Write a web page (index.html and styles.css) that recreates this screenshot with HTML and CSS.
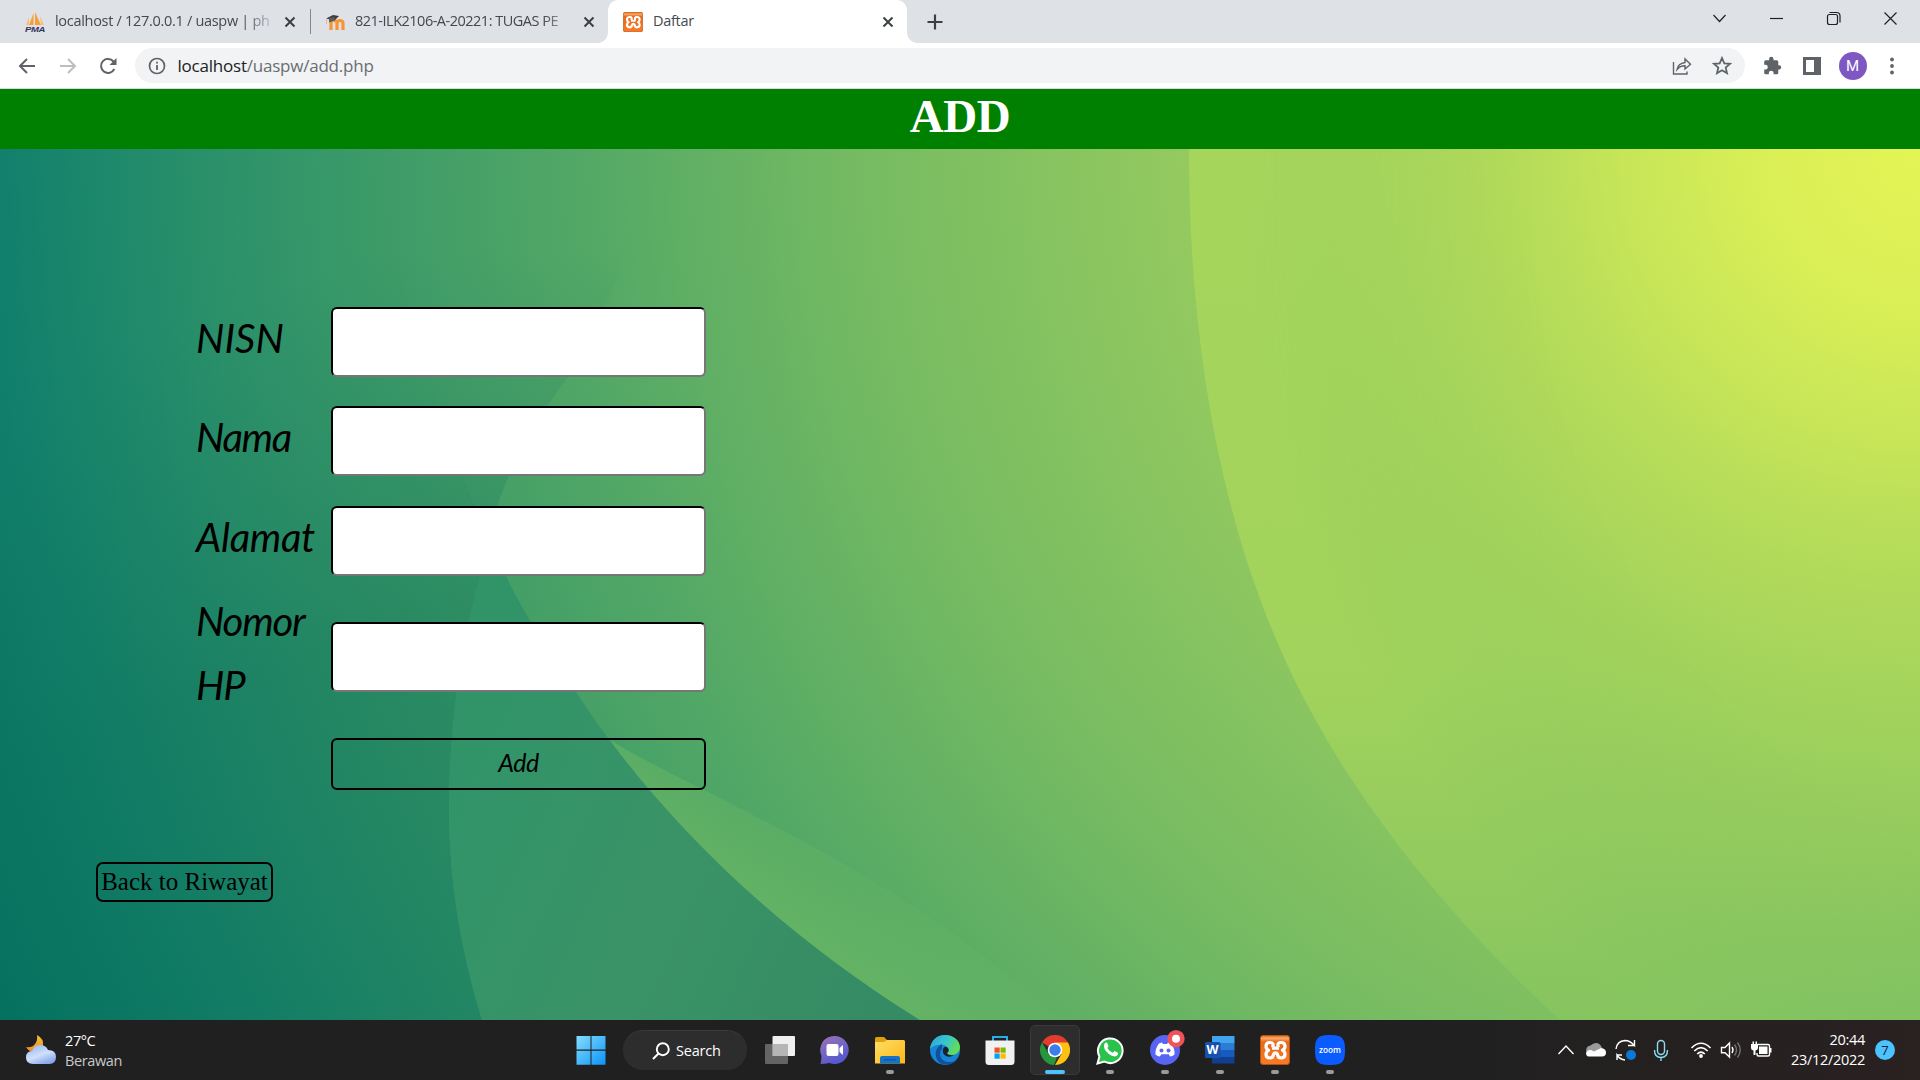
FILE: index.html
```html
<!DOCTYPE html>
<html lang="id">
<head>
<meta charset="utf-8">
<title>Daftar</title>
<link rel="stylesheet" href="styles.css">
</head>
<body>
<svg class="defs" width="0" height="0" aria-hidden="true">
  <defs>
    <linearGradient id="orange" x1="0" y1="0" x2="0" y2="1"><stop offset="0" stop-color="#d9712b"/><stop offset=".1" stop-color="#ffa564"/><stop offset=".22" stop-color="#e56a1b"/><stop offset="1" stop-color="#fb7a24"/></linearGradient>
    <symbol id="xampp" viewBox="0 0 30 30">
      <rect x=".5" y=".5" width="29" height="29" rx="2.500" fill="url(#orange)" stroke="#b5560f"/>
      <path d="M12.500 12.500Q14.500 7.500 10 7.500Q6 7.500 6 11.300Q6 14 8.500 15.200Q6 16.400 6 19.300Q6 23 10 23Q13 23 13.500 19.500Q14 17.800 15.500 17.800Q17 17.800 17.500 19.500Q18 23 21 23Q25 23 25 19.300Q25 16.400 22.500 15.200Q25 14 25 11.300Q25 7.500 21 7.500Q16.500 7.500 18.500 12.500M12 13.200H19" fill="none" stroke="#fff" stroke-width="3.200" stroke-linejoin="round"/>
    </symbol>
    <symbol id="cross" viewBox="0 0 12 12"><path d="M1.500 1.500l9 9m0-9l-9 9" stroke="#3c4043" stroke-width="2" fill="none"/></symbol>
  </defs>
</svg>

<header class="browser">
  <div class="tabstrip">
    <div class="tab tab-first">
      <svg class="favicon" viewBox="0 0 20 20"><path d="M8.500 1v12H4zM10 0l6 13h-6z" fill="#f6a03c"/><path d="M4 5v8H1zM15 4l4 9h-3z" fill="#f9bf74"/><text x="0" y="19.500" class="pma" textLength="20" lengthAdjust="spacingAndGlyphs">PMA</text></svg>
      <span class="tab-title fade">localhost / 127.0.0.1 / uaspw | ph</span>
      <svg class="x"><use href="#cross"/></svg>
    </div>
    <div class="tab tab-second">
      <svg class="favicon" viewBox="0 0 20 20"><path d="M6 18V11.500q0-3 3-3t3 3V18M12 11.500q0-3 3-3t3 3V18" fill="none" stroke="#f79433" stroke-width="3.200"/><path d="M1 6.500l7-3.500 6 1-4.500 4.500z" fill="#3c3c3c"/><path d="M4 6v4.500l5.500-2V5z" fill="#5c5c5c"/><path d="M1.500 6v6" stroke="#d9b79c"/></svg>
      <span class="tab-title fade title-two">821-ILK2106-A-20221: TUGAS PE</span>
      <svg class="x"><use href="#cross"/></svg>
    </div>
    <div class="tab tab-active">
      <svg class="favicon"><use href="#xampp"/></svg>
      <span class="tab-title">Daftar</span>
      <svg class="x"><use href="#cross"/></svg>
    </div>
    <svg class="plus" viewBox="0 0 16 16"><path d="M8 .5v15M.5 8h15" stroke="#3c4043" stroke-width="2.200"/></svg>
    <div class="window-controls">
      <svg viewBox="0 0 57 36"><path d="M22.500 15l6 6.500 6-6.500" /></svg>
      <svg viewBox="0 0 57 36"><path d="M22 18.500h13" /></svg>
      <svg viewBox="0 0 57 36"><rect x="22.500" y="14.500" width="10" height="10" rx="2"/><path d="M24.500 12.500h7q3.500 0 3.500 3.500v6.500"/></svg>
      <svg viewBox="0 0 57 36"><path d="M22.500 12.500l12 12m0-12l-12 12" /></svg>
    </div>
  </div>
  <div class="toolbar">
    <svg class="nav" viewBox="0 0 20 20"><path d="M18 10H3.500M10 3l-7 7 7 7" stroke="#5f6368"/></svg>
    <svg class="nav" viewBox="0 0 20 20"><path d="M2 10h14.500M10 3l7 7-7 7" stroke="#bcbec0"/></svg>
    <svg class="nav" viewBox="0 0 20 20"><path d="M16.300 13A7 7 0 1 1 15.500 5.500" stroke="#5f6368"/><path d="M18.500 2v7h-7z" fill="#5f6368"/></svg>
    <div class="omnibox">
      <svg class="info" viewBox="0 0 18 18"><circle cx="9" cy="9" r="7.500" fill="none" stroke="#5f6368" stroke-width="1.700"/><path d="M9 8v5M9 4.700v1.800" stroke="#5f6368" stroke-width="1.800"/></svg>
      <span class="url"><b>localhost</b>/uaspw/add.php</span>
      <svg class="omni-icon share" viewBox="0 0 20 20"><path d="M1.500 6v12H15v-2.500M5 13.500q1-6 8-7V3l5.500 5.300L13 13v-3.200q-5 0-8 3.700z"/></svg>
      <svg class="omni-icon" viewBox="0 0 20 20"><path d="M10 2l2.300 5.300 5.700.5-4.300 3.800 1.300 5.600-5-3-5 3 1.300-5.600L2 7.800l5.700-.5z" stroke-width="1.800"/></svg>
    </div>
    <svg class="ext" viewBox="0 0 20 20"><path d="M17.500 9.200h-1.200V5.800q0-1.500-1.500-1.500h-3.300V3a2.200 2.200 0 0 0-4.400 0v1.300H3.700q-1.500 0-1.500 1.500v3h1.200a2.400 2.400 0 0 1 0 4.800H2.200v3.200q0 1.500 1.500 1.500h3.100v-1.200a2.400 2.400 0 0 1 4.800 0v1.200h3.200q1.500 0 1.500-1.500v-3.300h1.200a2.200 2.200 0 0 0 0-4.300z" fill="#5f6368"/></svg>
    <svg class="ext" viewBox="0 0 20 20"><path d="M1 1h18v18H1zM4 4v12h8V4z" fill="#5f6368" fill-rule="evenodd"/></svg>
    <div class="avatar">M</div>
    <svg class="ext dots" viewBox="0 0 20 20"><circle cx="10" cy="3.500" r="1.900"/><circle cx="10" cy="10" r="1.900"/><circle cx="10" cy="16.500" r="1.900"/></svg>
  </div>
</header>

<main class="page">
  <h1 class="page-title">ADD</h1>
  <section class="stage">
    <svg class="wallpaper" viewBox="0 149 1920 871" preserveAspectRatio="none" aria-hidden="true">
      <defs>
        <radialGradient id="base" gradientUnits="userSpaceOnUse" cx="1920" cy="120" r="2120">
          <stop offset=".34" stop-color="#95ca5f"/><stop offset=".396" stop-color="#8ac560"/><stop offset=".5" stop-color="#76bb62"/><stop offset=".604" stop-color="#5aac65"/><stop offset=".66" stop-color="#4ca466"/><stop offset=".72" stop-color="#3f9c68"/><stop offset=".81" stop-color="#2a906a"/><stop offset=".906" stop-color="#11806c"/><stop offset="1" stop-color="#007062"/>
        </radialGradient>
        <radialGradient id="sun" gradientUnits="userSpaceOnUse" cx="1920" cy="149" r="870">
          <stop offset="0" stop-color="#e4f455"/><stop offset=".18" stop-color="#daef56"/><stop offset=".33" stop-color="#c8e658"/><stop offset=".46" stop-color="#b6dc5a"/><stop offset=".58" stop-color="#a9d65b"/><stop offset=".72" stop-color="#9bcf5d"/><stop offset=".85" stop-color="#8ec85f"/><stop offset="1" stop-color="#7cc062"/>
        </radialGradient>
        <radialGradient id="rim" gradientUnits="userSpaceOnUse" cx="2281" cy="200" r="1100">
          <stop offset=".68" stop-color="#fff" stop-opacity="0"/><stop offset=".94" stop-color="#fff"/>
        </radialGradient>
        <linearGradient id="rimColor" gradientUnits="userSpaceOnUse" x1="0" y1="149" x2="0" y2="1020">
          <stop offset="0" stop-color="#a6d55b"/><stop offset=".6" stop-color="#a2d35c"/><stop offset="1" stop-color="#86c460"/>
        </linearGradient>
        <mask id="rimMask" maskUnits="userSpaceOnUse" x="1100" y="149" width="820" height="871"><rect x="1100" y="149" width="820" height="871" fill="url(#rim)"/></mask>
        <linearGradient id="shade" gradientUnits="userSpaceOnUse" x1="340" y1="260" x2="460" y2="600">
          <stop offset="0" stop-color="#17775c" stop-opacity="0"/><stop offset="1" stop-color="#107258" stop-opacity=".36"/>
        </linearGradient>
        <linearGradient id="wedge" gradientUnits="userSpaceOnUse" x1="0" y1="250" x2="0" y2="545">
          <stop offset="0" stop-color="#2b8662" stop-opacity="0"/><stop offset="1" stop-color="#2b8662" stop-opacity=".5"/>
        </linearGradient>
        <linearGradient id="leaf" gradientUnits="userSpaceOnUse" x1="450" y1="800" x2="880" y2="1000">
          <stop offset="0" stop-color="#319469"/><stop offset=".5" stop-color="#3a9366"/><stop offset="1" stop-color="#358b64"/>
        </linearGradient>
        <linearGradient id="glow" gradientUnits="userSpaceOnUse" x1="800" y1="960" x2="890" y2="850">
          <stop offset="0" stop-color="#74bd64" stop-opacity=".65"/><stop offset="1" stop-color="#74bd64" stop-opacity="0"/>
        </linearGradient>
      </defs>
      <rect y="149" width="1920" height="871" fill="url(#base)"/>
      <path d="M610 740C690 790 900 870 1060 1020H900C760 930 680 850 610 740z" fill="url(#glow)"/>
      <path d="M380 149C388 230 407 309 430 377Q452 464 488 540Q505 460 568 377Q630 280 650 149z" fill="url(#wedge)"/>
      <path d="M0 149H380C388 230 407 309 430 377Q452 464 490 542Q449 680 449 810Q449 910 482 1020H0z" fill="url(#shade)"/>
      <path d="M490 542C515 600 544 645 576 692C640 790 750 915 920 1020H482Q449 915 449 810Q449 670 490 542z" fill="url(#leaf)"/>
      <path d="M1189 149C1189 320 1213 503 1286 662C1349 799 1451 920 1560 1020H1920V149z" fill="url(#sun)"/>
      <path d="M1189 149C1189 320 1213 503 1286 662C1349 799 1451 920 1560 1020H1920V149z" fill="url(#rimColor)" mask="url(#rimMask)"/>
    </svg>
    <form class="form">
      <label class="label nisn" for="nisn">NISN</label><input class="field" id="nisn" type="text">
      <label class="label nama" for="nama">Nama</label><input class="field" id="nama" type="text">
      <label class="label alamat" for="alamat">Alamat</label><input class="field" id="alamat" type="text">
      <label class="label nomor" for="hp">Nomor<br>HP</label><input class="field" id="hp" type="text">
      <button class="add" type="button">Add</button>
    </form>
    <a class="back">Back to Riwayat</a>
  </section>
</main>

<footer class="taskbar">
  <div class="weather">
    <svg class="weather-icon" viewBox="0 0 30 30">
      <defs><linearGradient id="moon" x1="0" y1="0" x2="0" y2="1"><stop offset="0" stop-color="#f3c52f"/><stop offset="1" stop-color="#f08a24"/></linearGradient><linearGradient id="cloud" x1="0" y1="0" x2=".6" y2="1"><stop offset="0" stop-color="#8db2f2"/><stop offset=".6" stop-color="#cfe0fb"/><stop offset="1" stop-color="#8ba9e8"/></linearGradient></defs>
      <path d="M11 0q7 4 6 10-2 7-9 7-5 0-8-5 6 1 9-3 3-4 2-9z" fill="url(#moon)"/>
      <path d="M7 29q-7 0-7-6.500T6 16q2-6 8-6 6 0 8 5 8 0 8 7t-7 7z" fill="url(#cloud)"/>
    </svg>
    <div class="weather-text"><span>27°C</span><span class="muted">Berawan</span></div>
  </div>
  <nav class="apps">
    <div class="app"><svg class="icon" viewBox="0 0 30 30"><defs><linearGradient id="win" x1="0" y1="0" x2="1" y2="1"><stop offset="0" stop-color="#86dcfb"/><stop offset="1" stop-color="#0a94fb"/></linearGradient></defs><path d="M.5 1h14v13.500H.5zM15.500 1h14v13.500h-14zM.5 15.700h14v14H.5zM15.500 15.700h14v14h-14z" fill="url(#win)"/></svg></div>
    <div class="search"><svg viewBox="0 0 18 18"><circle cx="10.800" cy="7.200" r="6" fill="none" stroke="#fff" stroke-width="1.900"/><path d="M6.500 11.500L1 17" stroke="#fff" stroke-width="2"/></svg><span>Search</span></div>
    <div class="app"><svg class="icon" viewBox="0 0 30 30"><rect x="7.500" y="1" width="22.500" height="20" rx="1" fill="#efefef"/><rect x="0" y="9" width="23" height="20" rx="1" fill="#777" fill-opacity=".78"/><path d="M7.500 9H23v12H7.500z" fill="#b5b5b5"/></svg></div>
    <div class="app"><svg class="icon" viewBox="0 0 30 30"><defs><linearGradient id="teams" x1="0" y1="0" x2=".5" y2="1"><stop offset="0" stop-color="#9b74b4"/><stop offset="1" stop-color="#5558cf"/></linearGradient></defs><path d="M14.500 1a14 14 0 1 1-5 27q-5 1-9 1 1-5 1-8A14 14 0 0 1 14.500 1z" fill="url(#teams)"/><rect x="6.500" y="9" width="12" height="12" rx="2" fill="#fff"/><path d="M19.500 13l3.500-3v10l-3.500-3z" fill="#fff"/></svg></div>
    <div class="app run"><svg class="icon" viewBox="0 0 30 30"><defs><linearGradient id="folder" x1="0" y1="0" x2="1" y2="1"><stop offset="0" stop-color="#ffdd68"/><stop offset="1" stop-color="#fdb813"/></linearGradient></defs><path d="M0 3.500Q0 2 1.500 2H9l3 3h10v8H0z" fill="#e0a008"/><path d="M0 7h9l3-2h16.500Q30 5 30 6.500v22H0z" fill="url(#folder)"/><path d="M5 28.500V23q0-2 2-2h16q2 0 2 2v5.500z" fill="#1673c8"/><path d="M9 24.800h12" stroke="#0b4f96"/></svg></div>
    <div class="app"><svg class="icon" viewBox="0 0 30 30"><defs><linearGradient id="edge1" x1="0" y1="0" x2="1" y2=".4"><stop offset="0" stop-color="#2ca5e0"/><stop offset=".6" stop-color="#38c6c9"/><stop offset="1" stop-color="#64dc58"/></linearGradient></defs><circle cx="15" cy="15" r="15" fill="#1685d4"/><path d="M0 14C1 5 7 0 15 0c9 0 15 6 15 12 0 5-4 8-8 8-3 0-5-1-5-2 2-2 2-6-3-8-5-1-11 0-14 4z" fill="url(#edge1)"/><path d="M12 14c-4 4-2 12 6 13 4 .6 8-1 10-4-3 7-13 8-18 5-6-4-6-15 2-19z" fill="#10509c"/><path d="M13 14q2-4 5-1 2 3-1 5 1 3 7 2-4 3-8 1-4-2-3-7z" fill="#17222b"/></svg></div>
    <div class="app"><svg class="icon" viewBox="0 0 30 30"><path d="M8 7V2h14v5" fill="none" stroke="#25aee8" stroke-width="2"/><path d="M.5 5.500h29v21q0 3.500-3.500 3.500H4Q.5 30 .5 26.500z" fill="#f1f1f1"/><path fill="#f25022" d="M9.500 12.500h5.200v5.200H9.500z"/><path fill="#7fba00" d="M15.500 12.500h5.200v5.200h-5.200z"/><path fill="#00a4ef" d="M9.500 18.500h5.200v5.200H9.500z"/><path fill="#ffb900" d="M15.500 18.500h5.200v5.200h-5.200z"/></svg></div>
    <div class="app run current"><svg class="icon" viewBox="0 0 30 30"><path d="M15 15L2 7.500A15 15 0 0 1 28 7.500z" fill="#e33b2e"/><path d="M15 7.500h13A15 15 0 0 1 15 30l6.500-11z" fill="#fdc112"/><path d="M2 7.500l6.500 11.300L15 22l2 .5L14 30A15 15 0 0 1 2 7.500z" fill="#26963f"/><circle cx="15" cy="15" r="7.300" fill="#fff"/><circle cx="15" cy="15" r="5.700" fill="#3b7de9"/></svg></div>
    <div class="app run"><svg class="icon" viewBox="0 0 30 30"><path d="M2.500 28.500l1.900-7A12.300 12.300 0 1 1 9.300 26.500z" fill="#28c24c" stroke="#fff" stroke-width="2"/><path d="M9.500 8.500q2-2 3 0l1 2.500q0 1-1.200 2 2 3.500 5.400 4.700l1.800-1.700 3.500 1.800q.5 2-1.500 3.200-3 1.500-8-2.200-6-5-4-10.300z" fill="#fff"/></svg></div>
    <div class="app run"><svg class="icon discord" viewBox="0 0 35 35"><circle cx="15" cy="20" r="15" fill="#5865f2"/><path d="M9 13.500l3-1 1 1.500h4l1-1.500 3 1q4 5 3.500 11-2 1.800-4.500 2l-1.200-2.200h-7.600L10 26.500q-2.500-.2-4.500-2-.5-6 3.500-11z" fill="#fff"/><circle cx="11.500" cy="20.500" r="2" fill="#5865f2"/><circle cx="18.500" cy="20.500" r="2" fill="#5865f2"/><circle cx="26" cy="8.700" r="8.700" fill="#ef5359"/><circle cx="26" cy="8.700" r="4" fill="#fff"/></svg></div>
    <div class="app run"><svg class="icon" viewBox="0 0 30 30"><path d="M7 1h22.500v7H7z" fill="#41a5ee"/><path d="M7 8h22.500v7H7z" fill="#2b7cd3"/><path d="M7 15h22.500v7H7z" fill="#185abd"/><path d="M7 22h22.500v6.500H7z" fill="#103f91"/><rect x="0" y="7" width="15.500" height="16" rx="1.500" fill="#1552b0"/><text x="1.500" y="19" class="word" textLength="12" lengthAdjust="spacingAndGlyphs">W</text></svg></div>
    <div class="app run"><svg class="icon"><use href="#xampp"/></svg></div>
    <div class="app run"><svg class="icon" viewBox="0 0 30 30"><path d="M15 0c12 0 15 3 15 15s-3 15-15 15S0 27 0 15 3 0 15 0z" fill="#0b5cff"/><text x="4" y="17.500" class="zoom" textLength="22" lengthAdjust="spacingAndGlyphs">zoom</text></svg></div>
  </nav>
  <div class="tray">
    <svg viewBox="0 0 30 30"><path d="M7.500 19l7.500-8 7.500 8" fill="none" stroke="#fff" stroke-width="1.400"/></svg>
    <svg viewBox="0 0 30 30"><path d="M8 20a5 5 0 0 1 1.500-9.500Q12 8 15 8q4 0 6 5l-9 7z" fill="#9b9b9b"/><path d="M7 21.500q-2-1-2-3 1-4 5-3.500l3 1.500 7-3.500q5 .5 5 4.500 0 4-4 4z" fill="#fff"/></svg>
    <svg viewBox="0 0 30 30"><path d="M5 14Q6 6 14 5.500q5 0 9.500 5V5m0 5.500H17M14 25q-5-.5-8-5v5m0-5h5" fill="none" stroke="#fff" stroke-width="1.400"/><circle cx="20" cy="20" r="5" fill="#0a78d7"/></svg>
    <svg class="mic" viewBox="0 0 30 30"><rect x="11.500" y="5.500" width="7" height="14" rx="3.500" fill="none" stroke="#8adcf0" stroke-width="1.400"/><path d="M8.500 15q0 7.500 6.500 7.500t6.500-7.500M15 22.500V26" fill="none" stroke="#8adcf0" stroke-width="1.400"/></svg>
    <svg class="wifi" viewBox="0 0 30 30"><path d="M5.500 13q9.500-9.500 19 0M8.300 16q6.700-6.700 13.400 0M11.200 19q3.800-3.800 7.600 0" fill="none" stroke="#fff" stroke-width="1.600"/><circle cx="15" cy="21" r="1.900" fill="#fff"/></svg>
    <svg viewBox="0 0 30 30"><path d="M5.500 12.500H9l4.500-4.500v14L9 17.700H5.500z" fill="none" stroke="#fff" stroke-width="1.400"/><path d="M16 12q2 3 0 6" fill="none" stroke="#fff" stroke-width="1.400"/><path d="M18.500 9.500q4 5.500 0 11M21.500 7.500q5.500 7.500 0 15" fill="none" stroke="#777" stroke-width="1.300"/></svg>
    <svg viewBox="0 0 30 30"><path d="M11.500 9.500H22q1.500 0 1.500 1.500v8.500q0 1.500-1.500 1.500h-9.500q-1.500 0-1.500-1.500V18" fill="none" stroke="#fff" stroke-width="1.400"/><path d="M13 11.500h8.500V19H13zM24 13h1.500v4.500H24zM5 9h7v4q0 2-2.500 2.500V20h-2v-4.500Q5 15 5 13zM6.500 6.500H8V9H6.500zM9.500 6.500H11V9H9.500z" fill="#fff"/></svg>
    <div class="clock"><span>20:44</span><span>23/12/2022</span></div>
    <div class="count">7</div>
  </div>
</footer>
</body>
</html>
```
FILE: styles.css
```css
* { box-sizing: border-box; }
body {
  margin: 0;
  width: 1920px;
  height: 1080px;
  overflow: hidden;
  display: flex;
  flex-direction: column;
  font-family: "Open Sans", "Noto Sans", sans-serif;
}
svg { display: block; flex: none; }
.defs { position: absolute; }

/* Browser window */
.browser { height: 89px; background: #fff; border-bottom: 1px solid #d9dadf; flex: none; }
.tabstrip { height: 43px; background: #dee1e6; display: flex; align-items: center; }
.tab { height: 43px; display: flex; align-items: center; color: #45494d; font-size: 14.5px; letter-spacing: -0.3px; }
.tab-first { width: 311px; padding-left: 25px; background: linear-gradient(#85888c, #85888c) no-repeat right 9px / 1px 25px; }
.tab-second { width: 297px; padding-left: 14px; }
.tab-active { width: 299px; padding-left: 15px; background: #fff; border-radius: 10px 10px 0 0; position: relative; }
.tab-active::before, .tab-active::after { content: ""; position: absolute; bottom: 0; width: 10px; height: 10px; }
.tab-active::before { left: -10px; background: radial-gradient(circle at 0 0, transparent 9.500px, #fff 10px); }
.tab-active::after { right: -10px; background: radial-gradient(circle at 100% 0, transparent 9.500px, #fff 10px); }
.favicon { width: 20px; height: 20px; margin-right: 10px; }
.pma { font: italic bold 8px "Liberation Sans", sans-serif; fill: #33335f; }
.tab-title { width: 219px; white-space: nowrap; line-height: 22px; padding-bottom: 1px; }
.title-two { letter-spacing: -0.5px; }
.fade { -webkit-mask-image: linear-gradient(90deg, #000 86%, transparent 102%); mask-image: linear-gradient(90deg, #000 86%, transparent 102%); }
.x { width: 12px; height: 12px; margin-left: 10px; }
.tab-second .x { margin-left: 9px; }
.tab-active .x { margin-left: 10px; }
.plus { width: 16px; height: 16px; margin-left: 20px; }
.window-controls { display: flex; margin-left: auto; margin-right: 1px; }
.window-controls svg { width: 57px; height: 36px; margin-bottom: 7px; fill: none; stroke: #202124; stroke-width: 1.200; }
.toolbar { height: 45px; display: flex; align-items: center; padding-left: 17px; }
.nav { width: 20px; height: 20px; margin-right: 20.500px; fill: none; stroke-width: 2; }
.omnibox { width: 1610px; height: 35px; margin-left: -4px; border-radius: 18px; background: #f1f3f4; display: flex; align-items: center; padding: 0 13px; }
.info { width: 18px; height: 18px; }
.url { margin-left: 12px; margin-right: auto; font-size: 17px; letter-spacing: -0.22px; color: #696d72; }
.url b { font-weight: 400; color: #202124; }
.omni-icon { width: 20px; height: 20px; fill: none; stroke: #5f6368; stroke-width: 1.400; }
.share { margin-right: 20px; }
.ext { width: 20px; height: 20px; margin-left: 20px; fill: #5f6368; }
.omnibox + .ext { margin-left: 17px; }
.avatar { width: 28px; height: 28px; margin-left: 17px; border-radius: 50%; background: #7e57c2; color: #fff; font: 15px/28px Roboto, sans-serif; text-align: center; }
.dots { margin-left: 15px; }

/* Page */
.page { flex: 1; display: flex; flex-direction: column; }
.page-title { height: 60px; margin: 0; background: #008000; color: #fff; font: bold 47px/54px "Liberation Serif", serif; letter-spacing: -0.4px; text-align: center; }
.stage { flex: 1; position: relative; display: flex; flex-direction: column; align-items: flex-start; }
.wallpaper { position: absolute; inset: 0; width: 100%; height: 100%; }
.form {
  position: relative;
  margin: 143px 0 0 196px;
  display: grid;
  grid-template-columns: 135px 375px;
  grid-template-rows: 99.500px 99.500px 99px 134px 79px;
  align-items: center;
}
.label { color: #000; font: italic 40px/64px Lato, sans-serif; padding-bottom: 8px; letter-spacing: -1px; white-space: nowrap; }
.nisn { letter-spacing: 0; }
.nama { letter-spacing: -1.300px; }
.alamat { letter-spacing: -0.300px; }
.nomor { padding-bottom: 9px; letter-spacing: -1.200px; }
.field { width: 375px; height: 70px; margin: 0; padding: 0 8px; background: #fff; border: 2px inset #767676; border-color: #1c1c1c #767676 #767676 #1c1c1c; border-radius: 6px; }
.add { grid-column: 2; height: 52px; padding: 0 0 3px; background: transparent; border: 2px solid #000; border-radius: 6px; color: #000; font: italic 25px Lato, sans-serif; letter-spacing: -0.5px; }
.back { position: relative; margin: 59px 0 0 96px; width: 177px; height: 40px; border: 2px solid #000; border-radius: 7px; color: #000; font: 25px/35px "Liberation Serif", serif; text-align: center; white-space: nowrap; }

/* Taskbar */
.taskbar { height: 60px; flex: none; background: linear-gradient(90deg, #202020 75%, #2a2121); display: flex; align-items: center; color: #fff; }
.weather { width: 563.500px; display: flex; align-items: center; padding-left: 26px; }
.weather-icon { width: 30px; height: 30px; }
.weather-text { display: flex; flex-direction: column; margin: 1px 0 0 9px; font-size: 14.500px; line-height: 20px; letter-spacing: -0.4px; }
.muted { color: #c9c9c9; }
.apps { display: flex; align-items: center; }
.app { width: 55px; height: 60px; display: grid; place-items: center; position: relative; }
.icon { width: 30px; height: 30px; position: relative; }
.discord { width: 35px; height: 35px; left: 2.500px; top: -2.500px; }
.run::after { content: ""; position: absolute; bottom: 6px; width: 8px; height: 4px; border-radius: 2px; background: #9a9a9a; }
.current::before { content: ""; position: absolute; inset: 5px 2.500px; border: 1px solid #3a3a3a; border-radius: 5px; background: #2d2d2d; }
.current::after { width: 20px; background: #4cc2ff; }
.search { width: 124px; height: 40px; margin: 0 5.500px 0 4.500px; border-radius: 20px; background: #2d2d2d; border-top: 1px solid #3a3a3a; display: flex; align-items: center; padding-left: 29px; font-size: 14.500px; letter-spacing: -0.2px; }
.search svg { width: 18px; height: 18px; margin-right: 6px; }
.word { font: bold 12px "Open Sans", sans-serif; fill: #fff; }
.zoom { font: 600 8px "Open Sans", sans-serif; fill: #fff; }
.tray { margin-left: auto; display: flex; align-items: center; padding-right: 25px; }
.tray svg { width: 30px; height: 30px; }
.tray .mic { margin-left: 5px; }
.tray .wifi { margin-left: 10px; }
.clock { width: 89px; display: flex; flex-direction: column; align-items: flex-end; font-size: 14.500px; line-height: 20px; letter-spacing: -0.3px; }
.count { width: 20px; height: 20px; margin-left: 10px; border-radius: 50%; background: #4cc2ff; color: #10202a; font-size: 13px; line-height: 20px; text-align: center; }
```
